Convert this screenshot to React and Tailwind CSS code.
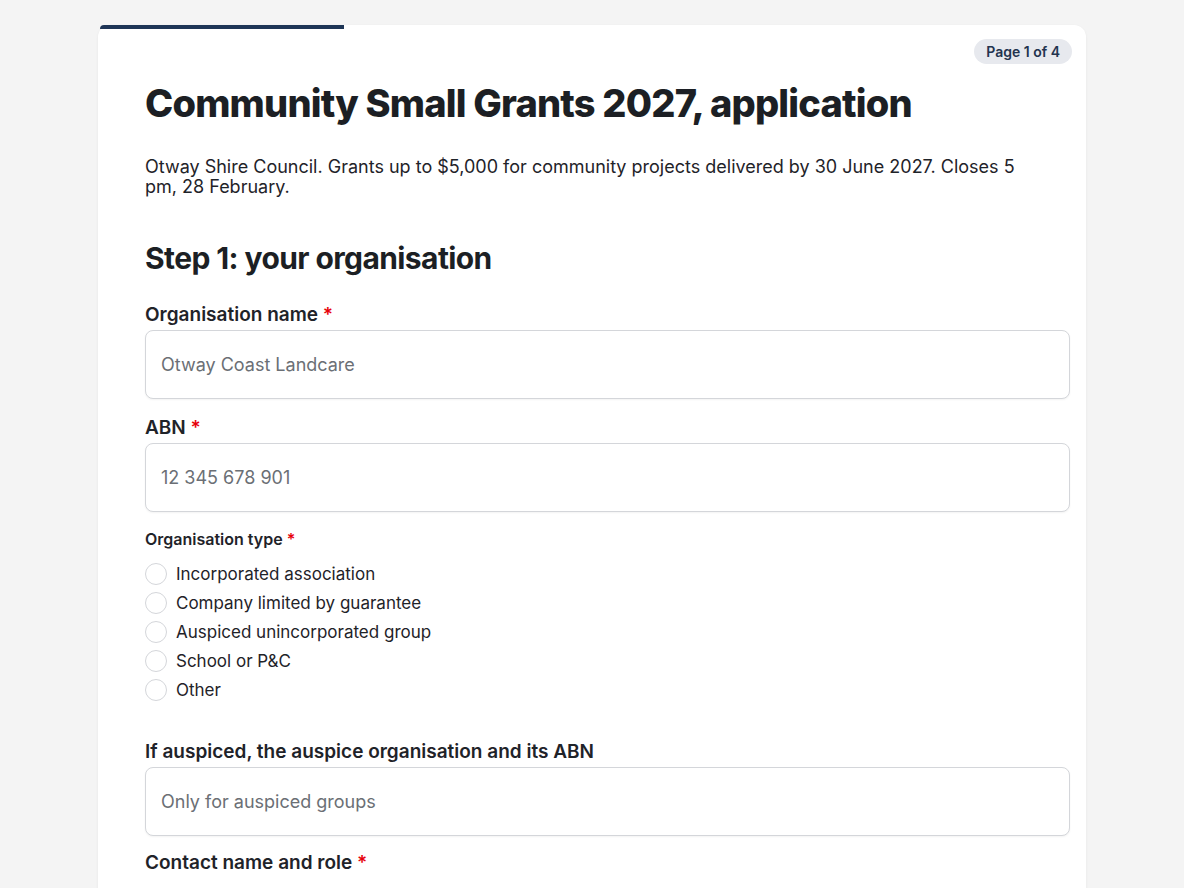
const opts = [
  'Incorporated association',
  'Company limited by guarantee',
  'Auspiced unincorporated group',
  'School or P&C',
  'Other',
];

const Req = () => <span className="text-red-600"> *</span>;

const Field = ({ label, placeholder, req }) => (
  <div className="mb-[16px]">
    <div className="text-[19px] font-semibold text-[#1f2329] mb-[2px] leading-[26px]">
      {label}
      {req && <Req />}
    </div>
    <div className="h-[69px] rounded-[8px] border border-[#d4d6da] bg-white px-[15px] flex items-center text-[18px] text-[#6b6f75] shadow-[0_1px_2px_rgba(0,0,0,0.05)]">
      {placeholder}
    </div>
  </div>
);

export default function App() {
  return (
    <div className="h-[888px] overflow-hidden bg-[#f4f4f4] pt-[25px] font-[Inter]">
      <div className="relative w-[988px] ml-[98px] bg-white rounded-t-[12px] shadow-[0_1px_3px_rgba(0,0,0,0.06)] pl-[47px] pr-[16px] pt-[56px] pb-10">
        <div className="absolute left-[2px] top-0 w-[244px] h-[4px] bg-[#1e3556] rounded-tl-[12px]" />
        <div className="absolute right-[14px] top-[14px] bg-[#e7e9ee] text-[#23344f] text-[14px] font-semibold rounded-full px-[12px] h-[25px] flex items-center">
          Page 1 of 4
        </div>
        <h1 className="text-[38px] font-extrabold text-[#1c1f24] tracking-[-0.8px] leading-[44px]">
          Community Small Grants 2027, application
        </h1>
        <p className="mt-[32px] text-[18px] text-[#1f2329] leading-[20px] pr-[30px]">
          Otway Shire Council. Grants up to $5,000 for community projects delivered by 30 June 2027. Closes 5 pm, 28 February.
        </p>
        <h2 className="mt-[43px] text-[30px] font-bold text-[#1c1f24] tracking-[-0.6px] leading-[36px]">
          Step 1: your organisation
        </h2>
        <div className="mt-[26px]">
          <Field label="Organisation name" placeholder="Otway Coast Landcare" req />
          <Field label="ABN" placeholder="12 345 678 901" req />
          <div className="text-[16px] font-semibold text-[#1f2329] leading-[22px] mb-[13px]">
            Organisation type<Req />
          </div>
          <div className="flex flex-col gap-[7px]">
            {opts.map((o) => (
              <label key={o} className="flex items-center gap-[9px] text-[17px] text-[#1f2329] leading-[22px]">
                <span className="w-[22px] h-[22px] rounded-full border border-[#d4d6da] bg-white" />
                {o}
              </label>
            ))}
          </div>
          <div className="mt-[38px]">
            <Field label="If auspiced, the auspice organisation and its ABN" placeholder="Only for auspiced groups" />
          </div>
          <div className="text-[19px] font-semibold text-[#1f2329] leading-[26px] -mt-[2px]">
            Contact name and role<Req />
          </div>
        </div>
      </div>
    </div>
  );
}
